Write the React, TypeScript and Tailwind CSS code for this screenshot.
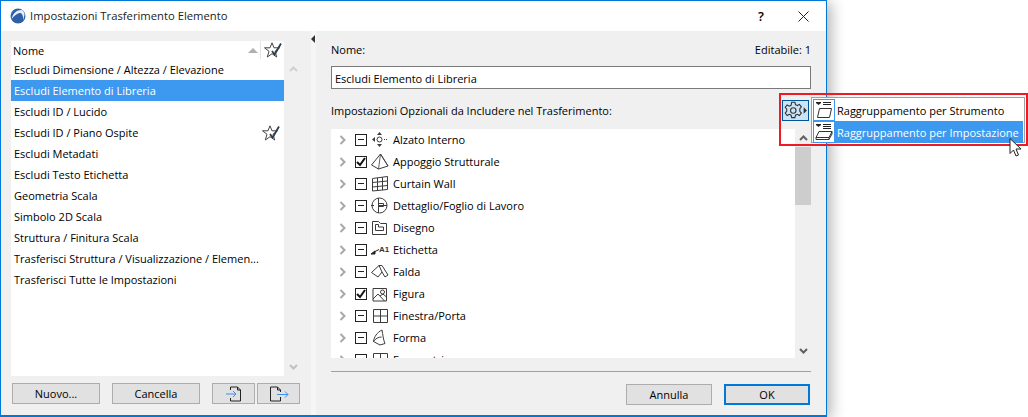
import React from "react";

const font = { fontFamily: '"Open Sans", "Noto Sans", sans-serif' };

function StarCheck() {
  return (
    <svg width="19" height="16" viewBox="0 0 19 16" fill="none">
      <path d="M8 .8 10 5.800h5.500L11 9.300l1.700 5.700L8 11.700 3.300 15 5 9.300.5 5.800H6z" stroke="#444" strokeWidth="1" fill="#fff" />
      <path d="M8 9l2.600 3.500L17 1.500" stroke="#2c3e50" strokeWidth="1.800" />
    </svg>
  );
}

function Chevron({ dir, color }: { dir: "up" | "down"; color: string }) {
  return (
    <svg width="9" height="6" viewBox="0 0 9 6" fill="none">
      <path d={dir === "up" ? "M1 5l3.500-3.500L8 5" : "M1 1l3.500 3.500L8 1"} stroke={color} strokeWidth="2" />
    </svg>
  );
}

function Check({ state }: { state: "dash" | "on" }) {
  return (
    <div className="w-[12px] h-[12px] border border-[#222] bg-white flex items-center justify-center shrink-0">
      {state === "dash" ? (
        <div className="w-[6px] h-px bg-[#222]" />
      ) : (
        <svg width="10" height="10" viewBox="0 0 10 10" fill="none">
          <path d="M1 5l3 3 5-7" stroke="#111" strokeWidth="2" />
        </svg>
      )}
    </div>
  );
}

const S = "#3c3c3c";
const icons: Record<string, React.ReactNode> = {
  alzato: (
    <>
      <circle cx="9.500" cy="8.500" r="2.500" stroke={S} />
      <path d="M9.500 1l2.500 3H7zM9.500 16l2.500-3H7zM2 8.500l3-2.500v5z" fill={S} />
      <path d="M14 8.500h3.500" stroke={S} strokeDasharray="1 1" />
    </>
  ),
  appoggio: (
    <>
      <path d="M10.500 1 1.500 12l7 4 9.500-3z" stroke={S} />
      <path d="M10.500 1 8.500 16M10.500 1 18 13" stroke={S} strokeWidth="0.8" />
    </>
  ),
  curtain: <path d="M2.500 3.500 17.500 1.500v13l-15 1.500zM2.500 7.500l15-1.500M2.500 12l15-1.500M7.500 3v12.500M12.500 2.300v12.700" stroke={S} />,
  dettaglio: (
    <>
      <circle cx="9.500" cy="8.500" r="7.500" stroke={S} />
      <path d="M8.500 1v15M8.500 8.500h8.500M1 8.500h3" stroke={S} />
      <path d="M8.500 6.500h5v3h-5z" stroke={S} />
    </>
  ),
  disegno: <path d="M2.500 2.500h6l2 2h6v11h-14zM5.500 11.500v-6h3v2.500h5v3.500z" stroke={S} />,
  etichetta: (
    <>
      <path d="M1 13l4-3v3zM4 11l5-2.500" stroke="#222" fill="#222" />
      <text x="9" y="10.500" fontSize="8" fontWeight="700" fill="#333" fontFamily="Liberation Sans">A1</text>
    </>
  ),
  falda: <path d="M1.500 9.500 9 2.500h3l6 9.500-3 2-3-5-4 5zM9 2.500l3 6.500" stroke={S} />,
  figura: (
    <>
      <path d="M3 3.500h13.500v12.500H3z" stroke={S} />
      <circle cx="12.500" cy="7" r="2" stroke={S} />
      <path d="M3 14l5-5 6.500 7M10 11l3-2 3.500 3" stroke={S} />
    </>
  ),
  finestra: <path d="M3.500 2.500h14v13h-14zM3.500 9h14M10.500 2.500v13" stroke={S} />,
  forma: <path d="M12 1C7 3.500 4 8 3.500 12.500L10 16l5-1.500C13 10 13 6 12 1zM3.500 12.500c2-3 5-4.500 8-4.500" stroke={S} />,
  forometria: <path d="M3.500 2.500h14v13h-14zM10.500 2.500v13" stroke={S} />,
};

const tree: [string, "dash" | "on", string][] = [
  ["Alzato Interno", "dash", "alzato"],
  ["Appoggio Strutturale", "on", "appoggio"],
  ["Curtain Wall", "dash", "curtain"],
  ["Dettaglio/Foglio di Lavoro", "dash", "dettaglio"],
  ["Disegno", "dash", "disegno"],
  ["Etichetta", "dash", "etichetta"],
  ["Falda", "dash", "falda"],
  ["Figura", "on", "figura"],
  ["Finestra/Porta", "dash", "finestra"],
  ["Forma", "dash", "forma"],
  ["Forometria", "dash", "forometria"],
];

const rows = [
  "Escludi Dimensione / Altezza / Elevazione",
  "Escludi Elemento di Libreria",
  "Escludi ID / Lucido",
  "Escludi ID / Piano Ospite",
  "Escludi Metadati",
  "Escludi Testo Etichetta",
  "Geometria Scala",
  "Simbolo 2D Scala",
  "Struttura / Finitura Scala",
  "Trasferisci Struttura / Visualizzazione / Elemen...",
  "Trasferisci Tutte le Impostazioni",
];

function Btn({ w, children, primary }: { w: string; children: React.ReactNode; primary?: boolean }) {
  return (
    <div
      className={`${w} h-[21px] bg-[#e1e1e1] flex items-center justify-center text-[11px] text-black ${
        primary ? "border-2 border-[#0078d7]" : "border border-[#adadad]"
      }`}
    >
      {children}
    </div>
  );
}

export default function App() {
  return (
    <div style={font} className="relative w-[1028px] h-[417px] bg-white overflow-hidden text-[11px] leading-none text-black">
      <div className="w-[827px] h-[417px] border border-[#0078d7] border-b-2 flex flex-col bg-[#f0f0f0] shadow-[4px_2px_14px_rgba(0,0,0,0.3)]">
        <div className="h-[30px] bg-white flex items-center shrink-0">
          <svg className="ml-[9px]" width="16" height="16" viewBox="0 0 16 16">
            <circle cx="8" cy="8" r="7.500" fill="#2f5fa8" />
            <path d="M1.500 11C3 5 7 2 11 2c2 0 3.500 2 3.500 5l-1.500 5.500c.5-3-.5-7-2.500-7.500C8 4.500 5 7 1.500 11z" fill="#e8eef8" />
          </svg>
          <span className="ml-[4px] text-[11.25px] text-[#222]">Impostazioni Trasferimento Elemento</span>
          <span className="ml-auto mr-[34px] text-[13px] font-semibold">?</span>
          <svg className="mr-[17px]" width="11" height="11" viewBox="0 0 11 11">
            <path d="M.5.5l10 10M10.500.5l-10 10" stroke="#222" />
          </svg>
        </div>
        <div className="flex-1 flex min-h-0">
          <div className="w-[310px] shrink-0 flex flex-col pl-[10px] pt-[10px] pb-[11px]">
            <div className="flex flex-1 min-h-0">
              <div className="w-[273px] h-[335px] bg-white flex flex-col">
                <div className="h-[18px] w-[272px] flex items-center pl-[2px] shrink-0">
                  <span>Nome</span>
                  <div className="ml-auto mr-[2px] w-0 h-0 border-l-[5px] border-r-[5px] border-b-[5px] border-l-transparent border-r-transparent border-b-[#b0b0b0]" />
                  <div className="w-px h-full bg-[#e5e5e5] mr-[3px]" />
                  <div className="w-[19px] shrink-0"><StarCheck /></div>
                </div>
                {rows.map((r, i) => (
                  <div
                    key={r}
                    className={`h-[21px] flex items-center pl-[3px] shrink-0 ${i === 1 ? "bg-[#3d98f0] text-white" : ""}`}
                  >
                    <span className="whitespace-nowrap">{r}</span>
                    {i === 3 && (
                      <span className="ml-auto mr-[3px]">
                        <StarCheck />
                      </span>
                    )}
                  </div>
                ))}
              </div>
              <div className="w-[16px] ml-px h-[335px] flex flex-col items-center justify-between pt-[25px] pb-[6px]">
                <Chevron dir="up" color="#d0d0d0" />
                <Chevron dir="down" color="#c0c0c0" />
              </div>
            </div>
            <div className="flex h-[21px] ml-px">
              <Btn w="w-[88px]">Nuovo...</Btn>
              <div className="w-[12px]" />
              <Btn w="w-[88px]">Cancella</Btn>
              <div className="w-[12px]" />
              <Btn w="w-[43px]">
                <svg width="18" height="16" viewBox="0 0 18 16" fill="none">
                  <path d="M5.500 4V1h7l3 3v11h-10v-3" stroke="#222" strokeWidth="1" />
                  <path d="M12.500 1v3h3" stroke="#222" />
                  <path d="M1 8h10M8 5l3 3-3 3" stroke="#3d8ff0" />
                </svg>
              </Btn>
              <div className="w-[2px]" />
              <Btn w="w-[43px]">
                <svg width="20" height="16" viewBox="0 0 20 16" fill="none">
                  <path d="M1.500 1h7l3 3v2M11.500 11v4h-10V1" stroke="#222" strokeWidth="1" />
                  <path d="M8.500 1v3h3" stroke="#222" />
                  <path d="M8 8.500h11M16 5.500l3 3-3 3" stroke="#3d8ff0" />
                </svg>
              </Btn>
            </div>
          </div>
          <div className="w-[5px] shrink-0 bg-[#f6f6f6] relative">
            <div className="absolute left-0 top-[4px] w-0 h-0 border-t-[4px] border-b-[4px] border-r-[4px] border-t-transparent border-b-transparent border-r-[#333]" />
          </div>
          <div className="flex-1 flex flex-col pl-[15px] pr-[15px] min-w-0">
            <div className="h-[35px] flex items-end justify-between pb-[11px] shrink-0">
              <span>Nome:</span>
              <span>Editabile: 1</span>
            </div>
            <div className="h-[23px] border border-[#7a7a7a] bg-white flex items-center pl-[3px] pt-[1px] shrink-0">
              Escludi Elemento di Libreria
            </div>
            <div className="h-[40px] flex items-center pt-[3px] shrink-0">
              Impostazioni Opzionali da Includere nel Trasferimento:
            </div>
            <div className="h-[229px] flex shrink-0">
              <div className="w-[464px] bg-white overflow-hidden">
                {tree.map(([label, st, ic]) => (
                  <div key={label} className="h-[22px] flex items-center shrink-0">
                    <svg className="ml-[8px]" width="7" height="10" viewBox="0 0 7 10" fill="none">
                      <path d="M1.500 1l4 4-4 4" stroke="#a8a8a8" strokeWidth="2" />
                    </svg>
                    <div className="ml-[9px] -mt-px">
                      <Check state={st} />
                    </div>
                    <svg className="ml-[3px] shrink-0 -mt-px" width="20" height="17" viewBox="0 0 20 17" fill="none">
                      {icons[ic]}
                    </svg>
                    <span className="ml-[3px] -mt-px">{label}</span>
                  </div>
                ))}
              </div>
              <div className="w-[16px] flex flex-col items-center">
                <div className="h-[6px]" />
                <Chevron dir="up" color="#606060" />
                <div className="w-[16px] h-[58px] bg-[#cdcdcd] mt-[6px]" />
                <div className="mt-auto mb-[4px]">
                  <Chevron dir="down" color="#606060" />
                </div>
              </div>
            </div>
            <div className="h-px bg-[#a0a0a0] mt-[13px] shrink-0" />
            <div className="flex justify-end gap-[12px] mt-[12px] mr-px">
              <Btn w="w-[86px]">Annulla</Btn>
              <Btn w="w-[86px]" primary>OK</Btn>
            </div>
          </div>
        </div>
      </div>

      {/* Overlay: gear + popup menu, highlighted by a red frame */}
      <div className="absolute left-[779px] top-[93px] w-[249px] h-[53px] border-2 border-[#ed1c24]" />
      <div className="absolute left-[782px] top-[100px] w-[27px] h-[21px] bg-[#cce4f7] border border-[#005499] flex items-center pl-[1px]">
        <svg width="24" height="19" viewBox="0 0 22 17" fill="none">
          <circle cx="8.500" cy="8.500" r="2.500" stroke="#333" />
          <path d="M7 1h3l.5 2.200 1.700.8 1.900-1.100 1.800 2.200-1.400 1.700v2.400l1.400 1.700-1.800 2.200-1.900-1.100-1.700.8-.5 2.200H7l-.5-2.200-1.700-.8-1.900 1.100-1.800-2.200 1.400-1.700V7.300L1.100 5.600l1.800-2.200 1.900 1.100 1.700-.8z" stroke="#333" />
          <path d="M18 5.500l3 3-3 3z" fill="#333" />
        </svg>
      </div>
      <div className="absolute left-[811px] top-[97px] w-[214px] h-[46px] bg-white border border-[#a0a0a0] p-px flex flex-col">
        <div className="h-[22px] flex items-center">
          <div className="w-[22px] h-[22px] border border-[#3d98f0] bg-white flex items-center justify-center shrink-0">
            <svg width="18" height="18" viewBox="0 0 18 18" fill="none">
              <path d="M1 1.500h5l-2.500 2zM8 1.500h8M8 3.500h8" stroke="#222" fill="#222" />
              <path d="M4.500 7.500h12l-2 9h-12z" stroke="#333" />
            </svg>
          </div>
          <span className="ml-[2px] text-black">Raggruppamento per Strumento</span>
        </div>
        <div className="h-[22px] flex items-center bg-[#3d98f0] text-white">
          <div className="w-[22px] h-[22px] border border-[#3d98f0] bg-white flex items-center justify-center shrink-0">
            <svg width="18" height="18" viewBox="0 0 18 18" fill="none">
              <path d="M1 1.500h5l-2.500 2zM8 1.500h8M8 3.500h8M8 5.500h8" stroke="#222" fill="#222" />
              <path d="M4 8.500h13l-3 6H1zM1 14.500v2h13l3-5.500v-2.500M14 14.500v2" stroke="#333" />
            </svg>
          </div>
          <span className="ml-[2px] whitespace-nowrap">Raggruppamento per Impostazione</span>
        </div>
      </div>
      <svg className="absolute left-[1009px] top-[138px]" width="13" height="19" viewBox="0 0 13 19">
        <path d="M1 .500v15l3.500-3.500 2.500 6 2.500-1-2.500-6h5z" fill="#fff" stroke="#222" />
      </svg>
    </div>
  );
}
